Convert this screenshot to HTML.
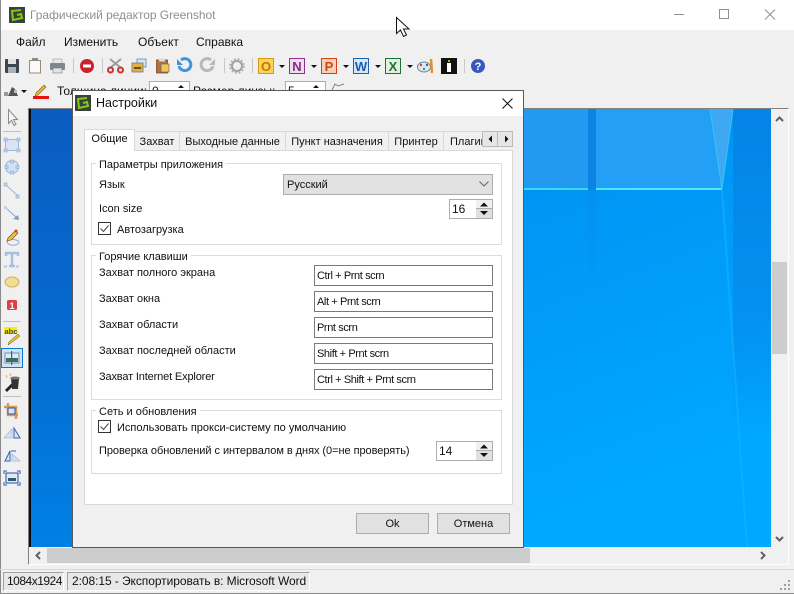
<!DOCTYPE html>
<html><head><meta charset="utf-8"><style>
html,body{margin:0;padding:0;width:794px;height:594px;overflow:hidden;background:#f0f0f0}
body{position:relative;font:11px "Liberation Sans","Noto Sans CJK SC",sans-serif;color:#111}
.a,.t{position:absolute}
.t{white-space:nowrap;line-height:14px}
.t:not(.m){margin-top:1px}
.m{font-size:12px}
.grp{position:absolute;border:1px solid #dcdcdc;box-sizing:border-box;left:91px;width:411px}
.leg{position:absolute;left:96px;background:#fff;padding:0 3px;line-height:14px;white-space:nowrap;margin-top:1px}
.inp{position:absolute;left:314px;width:179px;height:21px;box-sizing:border-box;border:1px solid #7a7a7a;background:#fff;line-height:21px;padding-left:2px;white-space:nowrap;letter-spacing:-.4px}
.tab{position:absolute;top:131px;height:19px;box-sizing:border-box;background:#f0f0f0;border:1px solid #d9d9d9;border-bottom:none;line-height:20px;text-align:center;white-space:nowrap;overflow:hidden}
.btn{position:absolute;top:513px;height:21px;width:73px;box-sizing:border-box;border:1px solid #adadad;background:#e1e1e1;text-align:center;line-height:21px}
</style></head><body>

<!-- main window -->
<div class="a" style="left:0;top:0;width:794px;height:30px;background:#fff"></div>
<div class="a" style="left:0;top:0;width:1px;height:594px;background:#8a8a8a"></div>
<div class="a" style="left:0;top:593px;width:794px;height:1px;background:#8a8a8a"></div>
<div class="t m" style="left:30px;top:8px;color:#8f8f8f;letter-spacing:-.05px">Графический редактор Greenshot</div>
<div class="t m" style="left:16px;top:35px">Файл</div>
<div class="t m" style="left:64px;top:35px">Изменить</div>
<div class="t m" style="left:138px;top:35px">Объект</div>
<div class="t m" style="left:196px;top:35px">Справка</div>

<div class="t m" style="left:57px;top:84px">Толщина линии:</div>
<div class="a m" style="left:149px;top:81px;width:41px;height:20px;box-sizing:border-box;border:1px solid #adadad;background:#fff;padding-left:2px;line-height:18px">0</div>
<div class="t m" style="left:193px;top:84px">Размер линзы:</div>
<div class="a m" style="left:285px;top:81px;width:41px;height:20px;box-sizing:border-box;border:1px solid #adadad;background:#fff;padding-left:2px;line-height:18px">5</div>
<svg class="a" style="left:0;top:0" width="400" height="100"><path d="M178 88h6l-3-3zM313 88h6l-3-3z" fill="#111"/><path d="M332 90l3-6 3 2 6-2" fill="none" stroke="#6a88a8"/></svg>

<!-- canvas -->
<div class="a" style="left:28px;top:108px;width:761px;height:457px;box-sizing:border-box;background:#f0f0f0;border-top:1px solid #808080;border-left:1px solid #808080;border-right:1px solid #fff;border-bottom:1px solid #fff"></div>
<div class="a" style="left:29px;top:109px;width:2px;height:438px;background:#0a0a14"></div>
<svg class="a" style="left:31px;top:109px" width="740" height="438">
<defs>
<linearGradient id="lb" x1="0" y1="0" x2="0" y2="1"><stop offset="0" stop-color="#0a5cc0"/><stop offset=".5" stop-color="#0569cf"/><stop offset="1" stop-color="#0080e4"/></linearGradient>
<linearGradient id="rb" x1="0" y1="0" x2=".6" y2="1"><stop offset="0" stop-color="#0086ea"/><stop offset=".35" stop-color="#0092f2"/><stop offset="1" stop-color="#00a8ff"/></linearGradient>
<linearGradient id="rd" x1="0" y1="0" x2="0" y2="1"><stop offset="0" stop-color="#0484e6"/><stop offset=".6" stop-color="#0490ee"/><stop offset="1" stop-color="#0490ee" stop-opacity="0"/></linearGradient>
<linearGradient id="dv" x1="0" y1="0" x2="0" y2="1"><stop offset="0" stop-color="#0c82e2"/><stop offset="1" stop-color="#0c82e2" stop-opacity="0"/></linearGradient>
</defs>
<rect width="41" height="438" fill="url(#lb)"/>
<rect x="41" width="699" height="438" fill="url(#rb)"/>
<rect x="702" width="38" height="320" fill="url(#rd)"/>
<rect x="557" y="80" width="8" height="100" fill="url(#dv)" opacity=".3"/>
<rect x="480" width="77" height="80" fill="#2499f2"/>
<rect x="557" width="8" height="80" fill="#0c82e2"/>
<polygon points="565,0 679,0 691,80 565,80" fill="#239ff6"/>
<polygon points="679,0 702,0 691,80" fill="#3ea8f2"/>
<rect x="480" y="79" width="77" height="2" fill="#3fd6f6"/>
<rect x="565" y="79" width="126" height="2" fill="#4fe8f8"/>
<path d="M679 0L691 80L702 0" fill="none" stroke="#35c4fa" stroke-width="1"/>
<path d="M691 80L716 438" fill="none" stroke="#1cb6ff" stroke-width="2" opacity=".5"/>
</svg>
<!-- scrollbars -->
<div class="a" style="left:772px;top:262px;width:15px;height:92px;background:#cdcdcd"></div>
<div class="a" style="left:47px;top:548px;width:483px;height:15px;background:#cdcdcd"></div>
<svg class="a" style="left:0;top:0" width="794" height="594" fill="none">
<path d="M776 121l3.500-3.500 3.500 3.500M776 537l3.500 3.500 3.500-3.500M40 552l-3.500 3.500 3.500 3.500M761 552l3.500 3.500-3.500 3.500" stroke="#606060" stroke-width="2"/>
</svg>

<!-- status bar -->
<div class="a" style="left:0;top:569px;width:794px;height:1px;background:#d8d8d8"></div>
<div class="t m" style="left:3px;top:572px;width:61px;height:19px;box-sizing:border-box;border:1px solid;border-color:#a0a0a0 #fff #fff #a0a0a0;background:#e8e8e8;line-height:17px;padding-left:3px;letter-spacing:-.5px">1084x1924</div>
<div class="t m" style="left:67px;top:572px;width:243px;height:19px;box-sizing:border-box;border:1px solid;border-color:#a0a0a0 #fff #fff #a0a0a0;background:#e8e8e8;line-height:17px;padding-left:4px;letter-spacing:-.07px">2:08:15 - Экспортировать в: Microsoft Word</div>
<svg class="a" style="left:778px;top:578px" width="14" height="14" fill="#a0a0a0"><rect x="10" y="2" width="2" height="2"/><rect x="6" y="6" width="2" height="2"/><rect x="10" y="6" width="2" height="2"/><rect x="2" y="10" width="2" height="2"/><rect x="6" y="10" width="2" height="2"/><rect x="10" y="10" width="2" height="2"/></svg>

<!-- icons -->
<svg class="a" style="left:0;top:0" width="794" height="594">
<!-- app icon -->
<rect x="9" y="7" width="16" height="16" fill="#3a403a"/><path d="M21 10l-9 1 1 9 9-2-1-4-4 1" fill="none" stroke="#7fcc10" stroke-width="2"/>
<!-- caption buttons -->
<path d="M674 14.500h10" stroke="#909090"/><rect x="719.500" y="9.500" width="9" height="9" fill="none" stroke="#909090"/><path d="M765 9.500l10 10m0-10l-10 10" stroke="#909090"/>
<!-- save -->
<rect x="5" y="59" width="14" height="14" rx="1" fill="#3c4650"/><rect x="8" y="59" width="8" height="5" fill="#dfe4e8"/><rect x="8" y="67" width="8" height="6" fill="#a8b0b8"/>
<!-- clipboard new -->
<rect x="29.500" y="60.500" width="11" height="12.500" fill="#fafafa" stroke="#9c8a70"/><rect x="32" y="58" width="6" height="3" fill="#8a8a8a"/>
<!-- print -->
<rect x="53" y="59" width="9" height="5" fill="#e8e8e8" stroke="#999" stroke-width=".6"/><rect x="50" y="63" width="15" height="7" rx="1" fill="#7e8890"/><rect x="53" y="68" width="9" height="5" fill="#e4e4e4" stroke="#777" stroke-width=".6"/>
<rect x="73" y="58" width="1" height="15" fill="#c8c8c8"/>
<!-- stop -->
<circle cx="87" cy="66" r="7" fill="#c8222c"/><rect x="83" y="64.500" width="8" height="3" fill="#fff"/>
<rect x="102" y="58" width="1" height="15" fill="#c8c8c8"/>
<!-- cut -->
<path d="M110 59l11 9M121 59l-11 9" stroke="#9a9ea2" stroke-width="2"/><circle cx="110.500" cy="70" r="2.500" fill="none" stroke="#d03030" stroke-width="2"/><circle cx="120.500" cy="70" r="2.500" fill="none" stroke="#d03030" stroke-width="2"/>
<!-- copy -->
<rect x="137" y="59" width="9" height="8" fill="#d8e6f2" stroke="#6888a8" stroke-width=".8"/><rect x="132" y="63" width="11" height="9" fill="#e0b040" stroke="#687888" stroke-width=".8"/><rect x="134" y="67" width="7" height="2" fill="#6a4a20"/>
<!-- paste -->
<rect x="156.500" y="60" width="11" height="13" fill="#b07040" stroke="#7a4a28" stroke-width=".8"/><rect x="159" y="58.500" width="6" height="3" fill="#ddd"/><rect x="161" y="64" width="8" height="8" fill="#f0c850" stroke="#667" stroke-width=".7"/>
<!-- undo / redo -->
<path d="M181 60a6 6 0 1 1-2 6" fill="none" stroke="#3f95dc" stroke-width="3"/><path d="M177 59v6h6z" fill="#3f95dc"/>
<path d="M211 60a6 6 0 1 0 2 6" fill="none" stroke="#b8b8b8" stroke-width="3"/><path d="M215 59v6h-6z" fill="#b8b8b8"/>
<rect x="224" y="58" width="1" height="15" fill="#c8c8c8"/>
<!-- gear -->
<circle cx="237" cy="66" r="5" fill="none" stroke="#a0a0a0" stroke-width="2"/><circle cx="237" cy="66" r="7" fill="none" stroke="#a8a8a8" stroke-width="1.500" stroke-dasharray="2 1.700"/>
<rect x="252" y="58" width="1" height="15" fill="#c8c8c8"/>
<!-- office -->
<rect x="258.500" y="58.500" width="15" height="15" fill="#fbd25c" stroke="#d89a10"/><text x="266" y="71" font-size="13" font-weight="bold" text-anchor="middle" fill="#c07800" font-family="Liberation Sans">O</text>
<path d="M279 65h6l-3 3z" fill="#111"/>
<rect x="289.500" y="58.500" width="15" height="15" fill="#f0dcf0" stroke="#903090"/><text x="297" y="71" font-size="13" font-weight="bold" text-anchor="middle" fill="#80307f" font-family="Liberation Sans">N</text>
<path d="M311 65h6l-3 3z" fill="#111"/>
<rect x="321.500" y="58.500" width="15" height="15" fill="#f8d0b8" stroke="#d04010"/><text x="329" y="71" font-size="13" font-weight="bold" text-anchor="middle" fill="#c84810" font-family="Liberation Sans">P</text>
<path d="M343 65h6l-3 3z" fill="#111"/>
<rect x="353.500" y="58.500" width="15" height="15" fill="#d4e6f8" stroke="#2060b0"/><text x="361" y="71" font-size="13" font-weight="bold" text-anchor="middle" fill="#1c5cb0" font-family="Liberation Sans">W</text>
<path d="M375 65h6l-3 3z" fill="#111"/>
<rect x="385.500" y="58.500" width="15" height="15" fill="#dff0dc" stroke="#207038"/><text x="393" y="71" font-size="13" font-weight="bold" text-anchor="middle" fill="#207038" font-family="Liberation Sans">X</text>
<path d="M407 65h6l-3 3z" fill="#111"/>
<!-- palette -->
<ellipse cx="424" cy="67" rx="6.500" ry="5" fill="#dfe8ec" stroke="#6a88a0"/><circle cx="421" cy="65" r="1.200" fill="#d04040"/><circle cx="424" cy="69" r="1.200" fill="#40a040"/><circle cx="427" cy="65" r="1.200" fill="#3060d0"/><path d="M431 59l1 14" stroke="#e89030" stroke-width="2.500"/>
<!-- info -->
<rect x="441" y="58" width="16" height="16" fill="#111"/><rect x="448" y="60" width="2" height="2" fill="#7fcc10"/><rect x="447" y="63" width="4" height="9" fill="#fff"/>
<rect x="464" y="59" width="1" height="14" fill="#c8c8c8"/>
<circle cx="478" cy="66" r="7" fill="#3858c0"/><text x="478" y="70" font-size="11" font-weight="bold" text-anchor="middle" fill="#fff" font-family="Liberation Sans">?</text>
<!-- second toolbar -->
<path d="M8 96l4-9 3 2 3 7z" fill="#555"/><rect x="4" y="92" width="4" height="4" fill="#999"/><rect x="14" y="90" width="3" height="3" fill="#bbb"/>
<path d="M21 90h6l-3 3z" fill="#111"/>
<path d="M36 93l8-8 2 2-8 8-3 1z" fill="#e8b830" stroke="#806020" stroke-width=".6"/><rect x="33" y="96" width="16" height="3" fill="#e81010"/>
<!-- left tools -->
<path d="M8.500 109.500v14l3-3 2.500 5 2-1-2.500-5h4z" fill="#f4f4f4" stroke="#8a8a8a"/>
<rect x="3" y="131" width="18" height="1" fill="#c0c0c0"/>
<rect x="5.500" y="139.500" width="13" height="11" fill="#d6e4f3" stroke="#9ab8d8"/>
<g fill="#c0d4ea" stroke="#8aaad0" stroke-width=".6"><rect x="4" y="138" width="3" height="3"/><rect x="17" y="138" width="3" height="3"/><rect x="4" y="149" width="3" height="3"/><rect x="17" y="149" width="3" height="3"/></g>
<circle cx="12" cy="167" r="6.500" fill="#d2e2f3" stroke="#9ab8d8"/>
<g fill="#c0d4ea" stroke="#8aaad0" stroke-width=".6"><rect x="10.500" y="160" width="3" height="3"/><rect x="10.500" y="171" width="3" height="3"/><rect x="5" y="165.500" width="3" height="3"/><rect x="16" y="165.500" width="3" height="3"/></g>
<path d="M6 185l12 11" stroke="#9ab8d8"/><rect x="4" y="183" width="3" height="3" fill="#c0d4ea" stroke="#8aaad0" stroke-width=".6"/><rect x="16" y="195" width="3" height="3" fill="#c0d4ea" stroke="#8aaad0" stroke-width=".6"/>
<path d="M6 208l11 10" stroke="#8aaad0"/><rect x="4" y="206" width="3" height="3" fill="#c0d4ea"/><path d="M19 220l-6-1 5-4z" fill="#7a9cc4"/>
<path d="M8 240c-3 3 2 6 7 5s5-4 1-5-8-1-6-2" fill="none" stroke="#8aaad0"/><path d="M8 238l7-7 3 2-7 7-4 1z" fill="#e8c040" stroke="#604818" stroke-width=".6"/><circle cx="16" cy="231" r="1.500" fill="#d04040"/>
<path d="M6 256v-3h12v3M12 253v13M9 266h6" fill="none" stroke="#a4c0dc" stroke-width="2.500"/><rect x="4" y="265" width="3" height="3" fill="#c0d4ea"/><rect x="16" y="265" width="3" height="3" fill="#c0d4ea"/>
<ellipse cx="12" cy="282" rx="7" ry="5" fill="#f4dc90" stroke="#c8b070"/><path d="M10 286l3 3v-3z" fill="#e8d080"/>
<rect x="7" y="300" width="10" height="10" rx="1.500" fill="#e04048"/><text x="12" y="309" font-size="9" font-weight="bold" text-anchor="middle" fill="#fff" font-family="Liberation Sans">1</text>
<rect x="3" y="321" width="18" height="1" fill="#c0c0c0"/>
<rect x="4" y="327" width="13" height="7" fill="#f4f000"/><text x="4.500" y="334" font-size="7.500" font-weight="bold" fill="#444" font-family="Liberation Sans">abc</text><path d="M9 342l9-8 2 2-9 7-3 2z" fill="#e8c030" stroke="#605010" stroke-width=".5"/>
<rect x="1.500" y="348.500" width="21" height="19" fill="#cfe3f6" stroke="#0a78d8"/><rect x="5" y="353" width="14" height="10" fill="#dfeaf0" stroke="#5a7a98" stroke-width=".8"/><rect x="6" y="358" width="12" height="4" fill="#3c7060"/><rect x="11" y="351" width="1.200" height="14" fill="#3060a8"/>
<path d="M5 390l8-8 2 2-8 8z" fill="#222"/><path d="M11 378h8l-1 11h-6z" fill="#333"/><ellipse cx="15" cy="378" rx="5" ry="1.500" fill="#777"/><path d="M6 375l1 3M10 373l.500 3" stroke="#e0b030"/>
<rect x="3" y="396" width="18" height="1" fill="#c0c0c0"/>
<path d="M8 403v12h10M4 407h12v12" fill="none" stroke="#d89a58" stroke-width="2.500"/><rect x="8" y="408" width="7" height="6" fill="#d8e4f0" stroke="#3058a8"/>
<path d="M4 438l8-9v9z" fill="#d4e0ee" stroke="#a4bcd8" stroke-width=".8"/><path d="M14 428v10h6z" fill="#dce6f4" stroke="#3860b8"/>
<path d="M5 461l5-10v10z" fill="#dce6f4" stroke="#3860b8"/><path d="M12 461v-7l8 7z" fill="#d4e0ee" stroke="#a4bcd8" stroke-width=".8"/><path d="M11 451h5" stroke="#3860b8"/>
<rect x="6" y="473" width="12" height="10" fill="#dfeaf0" stroke="#2850a8"/><rect x="8" y="478" width="8" height="3" fill="#305a70"/>
<path d="M4 474v-3h3M17 471h3v3M4 482v3h3M17 485h3v-3" fill="none" stroke="#2858c0"/>
</svg>

<!-- cursor -->
<svg class="a" style="left:394px;top:15px" width="18" height="24"><path d="M2.500 2.500v16l4-3.500 3 6.500 3-1.500-3-6h5.500z" fill="#fff" stroke="#111"/></svg>

<!-- dialog -->
<div class="a" style="left:72px;top:90px;width:452px;height:458px;box-sizing:border-box;border:1px solid #5a5a5a;background:#f0f0f0"></div>
<div class="a" style="left:73px;top:91px;width:450px;height:25px;background:#fff"></div>
<svg class="a" style="left:75px;top:95px" width="16" height="17"><rect width="16" height="16" fill="#3a403a"/><path d="M12 3L3 4l1 9 9-2-1-4-4 1" fill="none" stroke="#7fcc10" stroke-width="2"/></svg>
<div class="t m" style="left:96px;top:96px;font-size:12.500px">Настройки</div>
<svg class="a" style="left:500px;top:96px" width="14" height="14"><path d="M2.500 2.500l10 10m0-10l-10 10" stroke="#111" fill="none"/></svg>

<!-- tabs -->
<div class="a" style="left:84px;top:150px;width:429px;height:355px;box-sizing:border-box;background:#fff;border:1px solid #d9d9d9"></div>
<div class="tab" style="left:134px;width:46px">Захват</div>
<div class="tab" style="left:179px;width:107px">Выходные данные</div>
<div class="tab" style="left:285px;width:104px">Пункт назначения</div>
<div class="tab" style="left:388px;width:56px">Принтер</div>
<div class="tab" style="left:443px;width:40px;text-align:left;padding-left:6px;border-right:none">Плагины</div>
<div class="tab" style="left:84px;top:129px;width:51px;height:22px;background:#fff;border-color:#d9d9d9;line-height:18px;border-bottom:none">Общие</div>
<div class="a" style="left:482px;top:131px;width:16px;height:16px;box-sizing:border-box;border:1px solid #bbb;background:#e6e6e6"></div>
<div class="a" style="left:497px;top:131px;width:16px;height:16px;box-sizing:border-box;border:1px solid #bbb;background:#e6e6e6"></div>
<svg class="a" style="left:482px;top:131px" width="32" height="16" fill="#111"><path d="M10 4.500v7l-3.500-3.500zM23 4.500v7l3.500-3.500z"/></svg>

<!-- group 1 -->
<div class="grp" style="top:163px;height:82px"></div>
<div class="leg" style="top:157px">Параметры приложения</div>
<div class="t" style="left:99px;top:177px">Язык</div>
<div class="a" style="left:283px;top:174px;width:210px;height:21px;box-sizing:border-box;border:1px solid #adadad;background:#e1e1e1;line-height:21px;padding-left:3px">Русский</div>
<svg class="a" style="left:478px;top:180px" width="12" height="9"><path d="M1.500 1.500l4.500 4.500 4.500-4.500" fill="none" stroke="#666"/></svg>
<div class="t" style="left:99px;top:201px">Icon size</div>
<div class="a m" style="left:449px;top:199px;width:44px;height:20px;box-sizing:border-box;border:1px solid #adadad;background:#fff;line-height:18px;padding-left:2px">16</div>
<svg class="a" style="left:476px;top:200px" width="16" height="18"><rect width="16" height="18" fill="#f0f0f0"/><rect y="9" width="16" height="9" fill="#e0e0e0"/><rect y="8" width="16" height="1" fill="#adadad"/><path d="M4 6.500h8l-4-4zM4 11h8l-4 4z" fill="#111"/></svg>
<svg class="a" style="left:98px;top:222px" width="13" height="13"><rect x=".5" y=".5" width="12" height="12" fill="#fff" stroke="#333"/><path d="M2.500 6.500l3 3 5-6" fill="none" stroke="#444"/></svg>
<div class="t" style="left:117px;top:222px">Автозагрузка</div>

<!-- group 2 -->
<div class="grp" style="top:255px;height:145px"></div>
<div class="leg" style="top:249px">Горячие клавиши</div>
<div class="t" style="left:99px;top:265px">Захват полного экрана</div>
<div class="t" style="left:99px;top:291px">Захват окна</div>
<div class="t" style="left:99px;top:317px">Захват области</div>
<div class="t" style="left:99px;top:343px">Захват последней области</div>
<div class="t" style="left:99px;top:369px;letter-spacing:-.15px">Захват Internet Explorer</div>
<div class="inp" style="top:265px">Ctrl + Prnt scrn</div>
<div class="inp" style="top:291px">Alt + Prnt scrn</div>
<div class="inp" style="top:317px">Prnt scrn</div>
<div class="inp" style="top:343px">Shift + Prnt scrn</div>
<div class="inp" style="top:369px">Ctrl + Shift + Prnt scrn</div>

<!-- group 3 -->
<div class="grp" style="top:410px;height:64px"></div>
<div class="leg" style="top:404px">Сеть и обновления</div>
<svg class="a" style="left:98px;top:420px" width="13" height="13"><rect x=".5" y=".5" width="12" height="12" fill="#fff" stroke="#333"/><path d="M2.500 6.500l3 3 5-6" fill="none" stroke="#444"/></svg>
<div class="t" style="left:117px;top:420px">Использовать прокси-систему по умолчанию</div>
<div class="t" style="left:99px;top:443px;letter-spacing:-.05px">Проверка обновлений с интервалом в днях (0=не проверять)</div>
<div class="a m" style="left:436px;top:441px;width:57px;height:20px;box-sizing:border-box;border:1px solid #adadad;background:#fff;line-height:18px;padding-left:2px">14</div>
<svg class="a" style="left:476px;top:442px" width="16" height="18"><rect width="16" height="18" fill="#f0f0f0"/><rect y="9" width="16" height="9" fill="#e0e0e0"/><rect y="8" width="16" height="1" fill="#adadad"/><path d="M4 6.500h8l-4-4zM4 11h8l-4 4z" fill="#111"/></svg>

<div class="btn" style="left:356px">Ok</div>
<div class="btn" style="left:437px">Отмена</div>
</body></html>
